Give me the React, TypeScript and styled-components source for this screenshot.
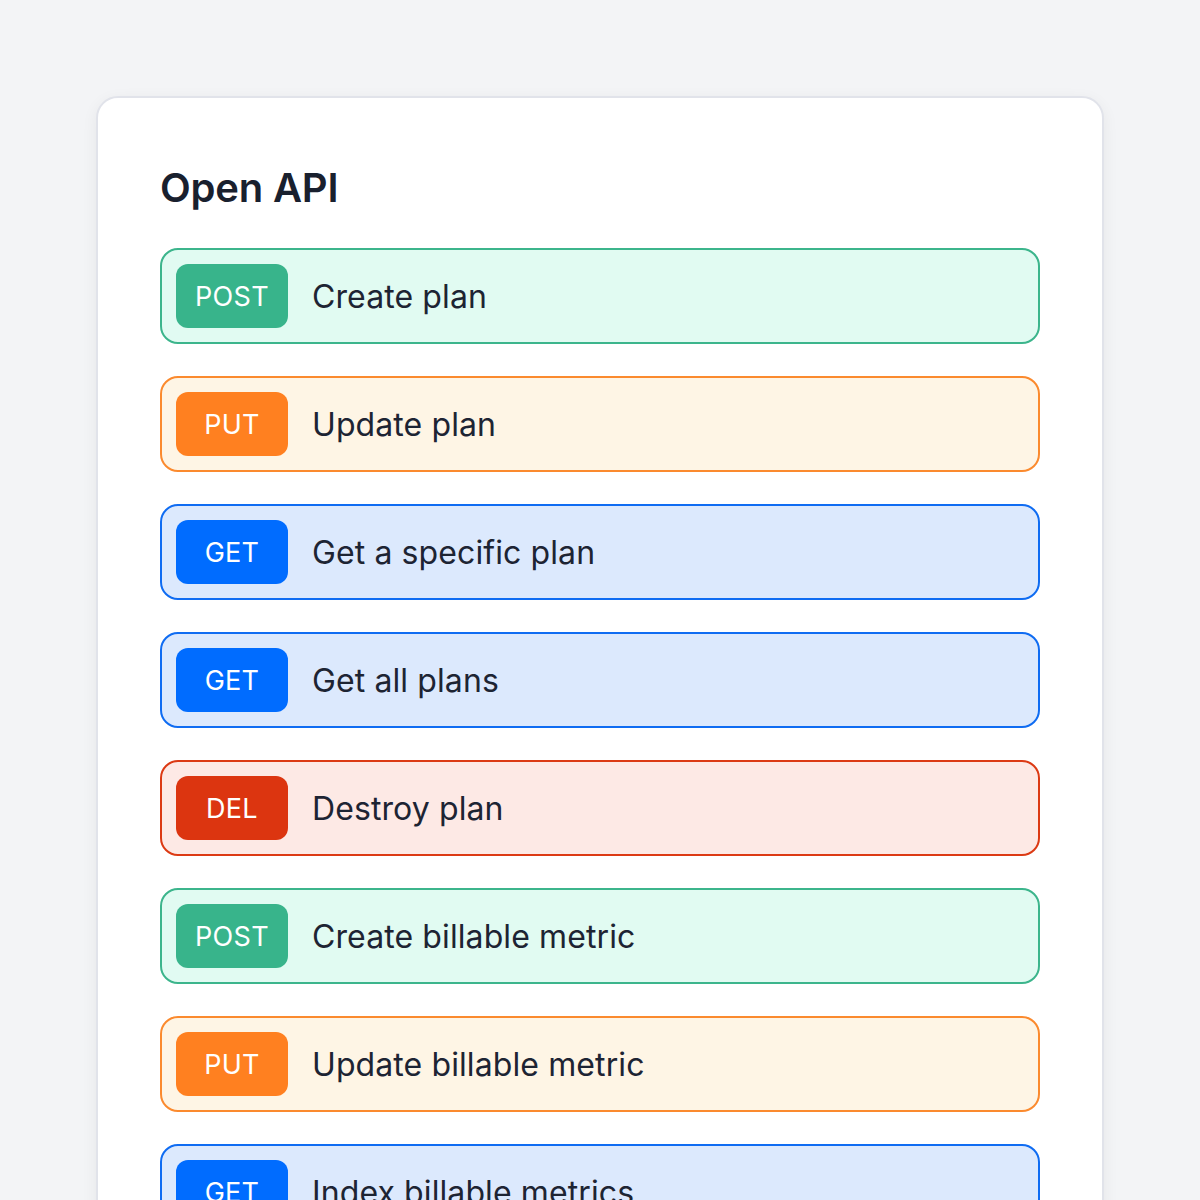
import { ReactElement } from "react";
import styled, { createGlobalStyle } from "styled-components";

type Method = "POST" | "PUT" | "GET" | "DEL";

const palette: Record<Method, { solid: string; border: string; tint: string }> = {
  POST: { solid: "#38b48b", border: "#3cb58c", tint: "#e1fbf2" },
  PUT: { solid: "#ff8020", border: "#fb8a2e", tint: "#fef5e5" },
  GET: { solid: "#006cff", border: "#0f6cf2", tint: "#dce9fd" },
  DEL: { solid: "#dc3510", border: "#dc3a14", tint: "#fde9e5" },
};

const endpoints: { method: Method; label: string }[] = [
  { method: "POST", label: "Create plan" },
  { method: "PUT", label: "Update plan" },
  { method: "GET", label: "Get a specific plan" },
  { method: "GET", label: "Get all plans" },
  { method: "DEL", label: "Destroy plan" },
  { method: "POST", label: "Create billable metric" },
  { method: "PUT", label: "Update billable metric" },
  { method: "GET", label: "Index billable metrics" },
  { method: "GET", label: "Get a billable metric" },
];

export default function App(): ReactElement {
  return (
    <>
      <GlobalStyle />
      <StyledPage>
        <StyledCard>
          <StyledTitle>Open API</StyledTitle>
          <StyledList>
            {endpoints.map((item, i) => (
              <StyledRow key={i} method={item.method}>
                <StyledBadge method={item.method}>{item.method}</StyledBadge>
                <StyledLabel>{item.label}</StyledLabel>
              </StyledRow>
            ))}
          </StyledList>
        </StyledCard>
      </StyledPage>
    </>
  );
}

const GlobalStyle = createGlobalStyle`
  html, body {
    margin: 0;
    padding: 0;
    background: #f3f4f6;
    font-family: Inter, "Noto Sans", sans-serif;
  }
`;

const StyledPage = styled.div(() => {
  return {
    padding: "96px 96px 0 96px",
    height: "1200px",
    boxSizing: "border-box",
    overflow: "hidden",
  };
});

const StyledCard = styled.div(() => {
  return {
    background: "#ffffff",
    border: "2px solid #e1e3ea",
    borderRadius: "22px",
    padding: "66px 62px 62px 62px",
    boxShadow: "0 4px 16px rgba(17, 24, 39, 0.06)",
  };
});

const StyledTitle = styled.h1(() => {
  return {
    margin: "0 0 36px 0",
    fontSize: "40px",
    lineHeight: "48px",
    fontWeight: 600,
    color: "#19202e",
    letterSpacing: "-0.2px",
  };
});

const StyledList = styled.div(() => {
  return {
    display: "flex",
    flexDirection: "column",
    gap: "32px",
  };
});

const StyledRow = styled.div<{ method: Method }>(({ method }) => {
  return {
    display: "flex",
    alignItems: "center",
    gap: "24px",
    height: "96px",
    boxSizing: "border-box",
    padding: "0 14px",
    border: `2px solid ${palette[method].border}`,
    borderRadius: "18px",
    background: palette[method].tint,
  };
});

const StyledBadge = styled.span<{ method: Method }>(({ method }) => {
  return {
    display: "flex",
    alignItems: "center",
    justifyContent: "center",
    width: "112px",
    height: "64px",
    flexShrink: 0,
    borderRadius: "12px",
    background: palette[method].solid,
    color: "#ffffff",
    fontSize: "27px",
    fontWeight: 400,
    letterSpacing: "0.3px",
  };
});

const StyledLabel = styled.span(() => {
  return {
    fontSize: "32px",
    color: "#1d2433",
    letterSpacing: "0.1px",
  };
});
